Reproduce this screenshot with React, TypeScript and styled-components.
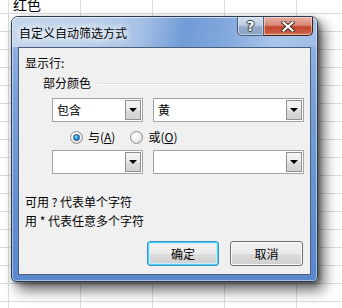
import styled, { createGlobalStyle } from "styled-components";

const GlobalStyle = createGlobalStyle`
  html, body {
    margin: 0;
    padding: 0;
  }
  body {
    width: 342px;
    height: 308px;
    overflow: hidden;
    background: #fff;
    font-family: "Noto Sans CJK SC", "Microsoft YaHei", sans-serif;
  }
`;

const Sheet = styled.div`
  position: relative;
  width: 342px;
  height: 308px;
  overflow: hidden;
  background-color: #fff;
  background-image: linear-gradient(to right, #dadcdd 1px, transparent 1px),
    linear-gradient(to bottom, #dadcdd 1px, transparent 1px);
  background-size: 72px 18px;
  background-position: 8px 13px;
`;

const SheetCells = styled.div`
  display: flex;
  flex-direction: column;
  margin-top: -5px;
  padding-left: 13px;
`;

const Cell = styled.div`
  height: 18px;
  line-height: 18px;
  font-size: 14px;
  color: #000;
`;

const Window = styled.div`
  position: absolute;
  left: 11px;
  top: 16px;
  width: 307px;
  height: 266px;
  box-sizing: border-box;
  display: flex;
  flex-direction: column;
  border: 1px solid #2e3b4f;
  border-radius: 7px 7px 5px 5px;
  background: linear-gradient(to bottom, #9dbbe4 0%, #7aa2da 30%, #6590d2 70%, #5a88cc 100%);
  box-shadow: inset 0 0 0 1px rgba(255, 255, 255, 0.45), 6px 8px 14px rgba(0, 0, 0, 0.6),
    2px 2px 4px rgba(0, 0, 0, 0.35);
`;

const TitleBar = styled.div`
  position: relative;
  height: 30px;
  flex: none;
  border-radius: 6px 6px 0 0;
  background: linear-gradient(100deg, #c4d6ec 0%, #bacfea 28%, #a6c1e6 42%, #729cd7 56%, #82a8dc 70%, #a9c5ea 86%, #a0bde7 100%);
  box-shadow: inset 0 1px 0 rgba(255, 255, 255, 0.6), inset 1px 0 0 rgba(255, 255, 255, 0.45),
    inset -1px 0 0 rgba(255, 255, 255, 0.45);
`;

const Title = styled.div`
  padding: 7px 0 0 7px;
  font-size: 12px;
  line-height: 18px;
  color: #000;
  text-shadow: 0 0 6px #fff, 0 0 8px rgba(255, 255, 255, 0.9), 0 0 10px rgba(255, 255, 255, 0.8);
`;

const CaptionButtons = styled.div`
  position: absolute;
  top: 0;
  right: 4px;
  display: flex;
`;

const CaptionButton = styled.div<{ $kind: "help" | "close" }>`
  width: ${({ $kind }) => ($kind === "help" ? "27px" : "49px")};
  height: 19px;
  box-sizing: border-box;
  display: flex;
  align-items: center;
  justify-content: center;
  border: 1px solid ${({ $kind }) => ($kind === "help" ? "#4a5d78" : "#4c1d15")};
  border-top: none;
  border-left-width: ${({ $kind }) => ($kind === "help" ? "1px" : "0")};
  border-radius: ${({ $kind }) => ($kind === "help" ? "0 0 0 5px" : "0 0 5px 0")};
  background: ${({ $kind }) =>
    $kind === "help"
      ? "linear-gradient(to bottom, #d3deec 0%, #bccde3 45%, #95abc9 55%, #8aa3c4 100%)"
      : "linear-gradient(to bottom, #e8b0a4 0%, #d78a78 45%, #c4452e 55%, #c85a3c 85%, #d4826a 100%)"};
  box-shadow: inset 0 0 0 1px rgba(255, 255, 255, 0.45);
  color: #fff;
  font-family: "DejaVu Sans", sans-serif;
  font-weight: bold;
  font-size: 14px;
  line-height: 1;
  text-shadow: 0 0 1px #233, 1px 0 0 #344, -1px 0 0 #344, 0 1px 0 #344, 0 -1px 0 #344;
`;

const Client = styled.div`
  flex: 1;
  margin: 0 6px 6px;
  box-sizing: border-box;
  border: 1px solid #4a5f7c;
  background: #f0f0f0;
  padding: 0 0 0 6px;
  display: flex;
  flex-direction: column;
  font-size: 12px;
  color: #000;
`;

const Label = styled.div<{ $top: number; $indent?: number }>`
  margin-top: ${({ $top }) => $top}px;
  margin-left: ${({ $indent = 0 }) => $indent}px;
  height: 18px;
  line-height: 18px;
  white-space: pre;
`;

const GroupHeader = styled.div`
  margin-top: 2px;
  margin-left: 18px;
  margin-right: 6px;
  height: 18px;
  line-height: 18px;
  display: flex;
  align-items: center;
  gap: 6px;
`;

const GroupLine = styled.div`
  flex: 1;
  height: 1px;
  background: #d5dfe5;
  box-shadow: 0 1px 0 #fff;
`;

const ComboRow = styled.div<{ $top: number }>`
  margin-top: ${({ $top }) => $top}px;
  margin-left: 27px;
  display: flex;
  gap: 10px;
`;

const Combo = styled.div<{ $w: number }>`
  width: ${({ $w }) => $w}px;
  height: 24px;
  box-sizing: border-box;
  border: 1px solid #a3a3a3;
  background: #fff;
  padding: 1px;
  display: flex;
  align-items: center;
`;

const ComboText = styled.span`
  flex: 1;
  padding-left: 3px;
  line-height: 18px;
`;

const DropButton = styled.div`
  width: 16px;
  height: 100%;
  box-sizing: border-box;
  border: 1px solid #8f8f8f;
  background: linear-gradient(to bottom, #f4f4f4 0%, #ebebeb 50%, #dcdcdc 51%, #d2d2d2 100%);
  display: flex;
  align-items: center;
  justify-content: center;
`;

const Arrow = styled.div`
  width: 0;
  height: 0;
  border-left: 4px solid transparent;
  border-right: 4px solid transparent;
  border-top: 4px solid #000;
`;

const RadioRow = styled.div`
  margin-top: 6px;
  margin-left: 45px;
  height: 18px;
  display: flex;
  align-items: center;
`;

const RadioItem = styled.label<{ $gap?: number }>`
  display: flex;
  align-items: center;
  gap: 5px;
  margin-left: ${({ $gap = 0 }) => $gap}px;
  line-height: 18px;
`;

const RadioCircle = styled.span<{ $checked: boolean }>`
  width: 13px;
  height: 13px;
  box-sizing: border-box;
  border-radius: 50%;
  border: 1px solid #8e8f8f;
  background: radial-gradient(circle at 40% 35%, #ffffff 0%, #f0f0f0 45%, #cfcfcf 100%);
  display: flex;
  align-items: center;
  justify-content: center;

  &::after {
    content: "";
    display: ${({ $checked }) => ($checked ? "block" : "none")};
    width: 7px;
    height: 7px;
    box-sizing: border-box;
    border-radius: 50%;
    border: 1px solid #1b4f83;
    background: radial-gradient(circle at 40% 35%, #8fe0ff 0%, #2d9be0 45%, #0d5ea8 100%);
  }
`;

const Key = styled.span`
  text-decoration: underline;
  text-underline-offset: 1px;
`;

const ButtonRow = styled.div`
  margin-top: 11px;
  margin-right: 7px;
  display: flex;
  justify-content: flex-end;
  gap: 11px;
`;

const Button = styled.div<{ $default?: boolean; $w: number }>`
  width: ${({ $w }) => $w}px;
  height: 25px;
  box-sizing: border-box;
  display: flex;
  align-items: center;
  justify-content: center;
  border: 1px solid ${({ $default }) => ($default ? "#3c8fc4" : "#707070")};
  border-radius: 3px;
  background: linear-gradient(to bottom, #f2f2f2 0%, #ebebeb 50%, #dddddd 51%, #cfcfcf 100%);
  box-shadow: ${({ $default }) =>
    $default ? "inset 0 0 0 1px #48d2f8, inset 0 0 0 2px #c4eefc" : "inset 0 0 0 1px #fcfcfc"};
  line-height: 18px;
`;

function CloseGlyph() {
  return (
    <svg width="14" height="11" viewBox="0 0 14 11">
      <path d="M2.5 1.5 L11.5 9.5 M11.5 1.5 L2.5 9.5" stroke="#3b2b28" strokeWidth="4" strokeLinecap="square" />
      <path d="M2.5 1.5 L11.5 9.5 M11.5 1.5 L2.5 9.5" stroke="#fff" strokeWidth="2.2" strokeLinecap="square" />
    </svg>
  );
}

const App = () => {
  return (
    <>
      <GlobalStyle />
      <Sheet>
        <SheetCells>
          <Cell>红色</Cell>
          <Cell>无填充</Cell>
        </SheetCells>
        <Window>
          <TitleBar>
            <Title>自定义自动筛选方式</Title>
            <CaptionButtons>
              <CaptionButton $kind="help">?</CaptionButton>
              <CaptionButton $kind="close">
                <CloseGlyph />
              </CaptionButton>
            </CaptionButtons>
          </TitleBar>
          <Client>
            <Label $top={6}>显示行:</Label>
            <GroupHeader>
              部分颜色
              <GroupLine />
            </GroupHeader>
            <ComboRow $top={6}>
              <Combo $w={91}>
                <ComboText>包含</ComboText>
                <DropButton>
                  <Arrow />
                </DropButton>
              </Combo>
              <Combo $w={151}>
                <ComboText>黄</ComboText>
                <DropButton>
                  <Arrow />
                </DropButton>
              </Combo>
            </ComboRow>
            <RadioRow>
              <RadioItem>
                <RadioCircle $checked />
                <span>
                  与(<Key>A</Key>)
                </span>
              </RadioItem>
              <RadioItem $gap={15}>
                <RadioCircle $checked={false} />
                <span>
                  或(<Key>O</Key>)
                </span>
              </RadioItem>
            </RadioRow>
            <ComboRow $top={4}>
              <Combo $w={91}>
                <ComboText />
                <DropButton>
                  <Arrow />
                </DropButton>
              </Combo>
              <Combo $w={151}>
                <ComboText />
                <DropButton>
                  <Arrow />
                </DropButton>
              </Combo>
            </ComboRow>
            <Label $top={19}>可用 ? 代表单个字符</Label>
            <Label $top={1}>用 * 代表任意多个字符</Label>
            <ButtonRow>
              <Button $default $w={72}>
                确定
              </Button>
              <Button $w={73}>取消</Button>
            </ButtonRow>
          </Client>
        </Window>
      </Sheet>
    </>
  );
};

export default App;
